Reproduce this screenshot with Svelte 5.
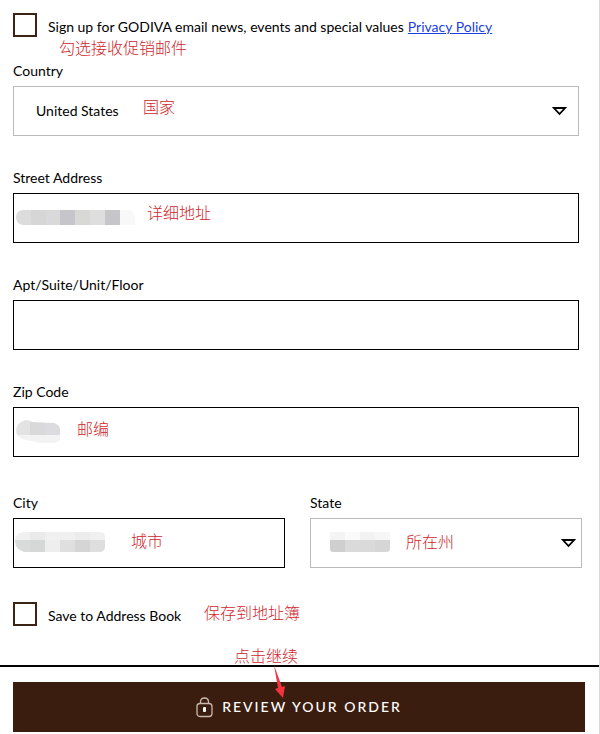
<script>
  const mosaics = {
    street: {
      width: 120,
      height: 15,
      tiles: [
        [0, 0, 15, 15, "#dcdcdc"],
        [15, 0, 15, 15, "#d6d6d7"],
        [30, 0, 14, 15, "#d9d9db"],
        [44, 0, 15, 15, "#c6c5cb"],
        [59, 0, 15, 15, "#d8d8d7"],
        [74, 0, 15, 15, "#dededf"],
        [89, 0, 15, 15, "#c6c5c9"],
        [104, 0, 16, 15, "#f8f8f8"]
      ],
      shape: "M7 0H114Q120 2 119 15H7Q0 14 0 7Q0 1 7 0Z"
    },
    zip: {
      width: 44,
      height: 24,
      tiles: [
        [0, 0, 14, 15, "#e3e3e4"],
        [14, 0, 15, 15, "#d9d9da"],
        [29, 0, 15, 15, "#dcdce0"],
        [0, 15, 44, 9, "#f3f3f3"]
      ],
      shape: "M10 0Q13 0 16 2L38 3Q44 5 44 9V20Q42 23 36 23H24Q17 21 10 20Q0 18 0 10Q1 2 10 0Z"
    },
    city: {
      width: 90,
      height: 20,
      tiles: [
        [0, 0, 90, 8, "#f0f0f1"],
        [15, 0, 15, 8, "#eaeaeb"],
        [60, 0, 15, 8, "#ececed"],
        [0, 8, 15, 12, "#d9dada"],
        [15, 8, 15, 12, "#d6d7d7"],
        [30, 8, 15, 12, "#eeeeef"],
        [45, 8, 15, 12, "#dfdfe0"],
        [60, 8, 15, 12, "#d5d5d6"],
        [75, 8, 15, 12, "#dededf"]
      ],
      shape: "M8 0H86Q90 1 90 4V15Q90 20 84 20H9Q0 17 0 9Q0 2 8 0Z"
    },
    state: {
      width: 60,
      height: 20,
      tiles: [
        [0, 0, 15, 8, "#f4f4f4"],
        [15, 0, 15, 8, "#fafafa"],
        [30, 0, 15, 8, "#f2f2f2"],
        [45, 0, 15, 8, "#f6f6f6"],
        [0, 8, 15, 12, "#cfcfd0"],
        [15, 8, 30, 12, "#dadada"],
        [45, 8, 15, 12, "#d6d6d6"]
      ],
      shape: "M0 0H60V17Q60 20 56 20H3Q0 20 0 17Z"
    }
  };
</script>

{#snippet mosaic(name)}
  <svg
    class="mosaic mosaic--{name}"
    width={mosaics[name].width}
    height={mosaics[name].height}
    aria-hidden="true"
  >
    <clipPath id="clip-{name}"><path d={mosaics[name].shape} /></clipPath>
    <g clip-path="url(#clip-{name})" shape-rendering="crispEdges">
      {#each mosaics[name].tiles as [x, y, width, height, fill]}
        <rect {x} {y} {width} {height} {fill} />
      {/each}
    </g>
  </svg>
{/snippet}

{#snippet arrow()}
  <svg class="select__arrow" width="15" height="9" viewBox="0 0 15 9" aria-hidden="true">
    <path d="M2 1H13L7.5 7Z" fill="none" stroke="#000" stroke-width="1.8" />
  </svg>
{/snippet}

<form class="checkout">
  <div class="checkout__fields">
    <div class="check check--signup">
      <input class="check__box" type="checkbox" id="signup" />
      <label for="signup">Sign up for GODIVA email news, events and special values</label>
      <a href="#privacy">Privacy Policy</a>
      <span class="note note--signup">勾选接收促销邮件</span>
    </div>

    <div class="field">
      <label for="country">Country</label>
      <div class="field__control">
        <select class="select" id="country">
          <option>United States</option>
        </select>
        {@render arrow()}
        <span class="note note--country">国家</span>
      </div>
    </div>

    <div class="field">
      <label for="street">Street Address</label>
      <div class="field__control">
        <input class="input" type="text" id="street" />
        {@render mosaic("street")}
        <span class="note note--street">详细地址</span>
      </div>
    </div>

    <div class="field">
      <label for="apt">Apt/Suite/Unit/Floor</label>
      <div class="field__control">
        <input class="input" type="text" id="apt" />
      </div>
    </div>

    <div class="field">
      <label for="zip">Zip Code</label>
      <div class="field__control">
        <input class="input" type="text" id="zip" />
        {@render mosaic("zip")}
        <span class="note note--zip">邮编</span>
      </div>
    </div>

    <div class="checkout__row">
      <div class="field">
        <label for="city">City</label>
        <div class="field__control">
          <input class="input" type="text" id="city" />
          {@render mosaic("city")}
          <span class="note note--city">城市</span>
        </div>
      </div>

      <div class="field">
        <label for="state">State</label>
        <div class="field__control">
          <select class="select" id="state">
            <option value=""></option>
          </select>
          {@render mosaic("state")}
          {@render arrow()}
          <span class="note note--state">所在州</span>
        </div>
      </div>
    </div>

    <div class="check check--save">
      <input class="check__box" type="checkbox" id="save" />
      <label for="save">Save to Address Book</label>
      <span class="note note--save">保存到地址簿</span>
    </div>
  </div>

  <div class="checkout__footer">
    <span class="note note--continue">点击继续</span>
    <svg class="pointer" width="16" height="34" viewBox="0 0 16 34" aria-hidden="true">
      <path d="M1 0L9 22L12 21L10 33L2 24L5 23Z" fill="#f5333f" />
    </svg>
    <button class="review" type="button">
      <svg width="18" height="21" viewBox="0 0 18 21" fill="none" stroke="#c9b8ae" aria-hidden="true">
        <rect x="1" y="6.5" width="15" height="13" rx="3" stroke-width="1.3" />
        <path d="M4.5 6.5V5Q4.5 1 8.5 1T12.5 5V6.5" stroke-width="1.3" />
        <rect x="7" y="10" width="3" height="5" rx="1" fill="#fff" stroke="none" />
      </svg>
      REVIEW YOUR ORDER
    </button>
  </div>
</form>

<style>
  :global(body) {
    margin: 0;
    background: #fff;
  }
  .checkout {
    border-right: 1px solid #d9d9d9;
    color: #000;
    font: 14px/20px Lato, "Noto Sans CJK SC", sans-serif;
    padding-bottom: 2px;
  }
  .checkout__fields {
    display: flex;
    flex-direction: column;
    gap: 32px;
    padding: 13px 20px 39px 13px;
  }
  .checkout__row {
    display: grid;
    grid-template-columns: 1fr 1fr;
    gap: 25px;
    margin: 4px -3px 0 0;
  }
  .check {
    position: relative;
    display: flex;
    align-items: center;
    height: 24px;
  }
  .check label {
    padding-top: 4px;
  }
  .check--signup {
    margin-bottom: -8px;
  }
  .check--save {
    margin-top: 2px;
  }
  .check__box {
    appearance: none;
    box-sizing: border-box;
    width: 24px;
    height: 24px;
    margin: 0 11px 0 0;
    border: 2px solid #3b2415;
    background: #fff;
  }
  .check__box:checked {
    box-shadow: inset 0 0 0 4px #fff;
    background: #3b1d0f;
  }
  .check a {
    padding: 4px 0 0 4px;
    color: #1a3fe0;
  }
  .field {
    display: flex;
    flex-direction: column;
    gap: 5px;
    min-width: 0;
  }
  .field__control {
    position: relative;
  }
  .input,
  .select {
    display: block;
    box-sizing: border-box;
    width: 100%;
    height: 50px;
    border: 1px solid #000;
    border-radius: 0;
    background: #fff;
    color: inherit;
    font: inherit;
    padding: 0 22px;
  }
  .select {
    appearance: none;
    border-color: #bbb;
  }
  .select__arrow {
    position: absolute;
    top: 21px;
    right: 12px;
    pointer-events: none;
  }
  .checkout__row .select__arrow {
    right: 6px;
  }
  .mosaic {
    position: absolute;
    pointer-events: none;
  }
  .mosaic--street {
    top: 17px;
    left: 3px;
  }
  .mosaic--zip {
    top: 13px;
    left: 3px;
  }
  .mosaic--city {
    top: 14px;
    left: 2px;
  }
  .mosaic--state {
    top: 14px;
    left: 20px;
  }
  .note {
    position: absolute;
    color: #d0262c;
    font: 300 16px/20px "Noto Sans CJK SC", sans-serif;
    white-space: nowrap;
    pointer-events: none;
  }
  .note--signup {
    top: 24px;
    left: 46px;
  }
  .note--country {
    top: 10px;
    left: 130px;
  }
  .note--street {
    top: 9px;
    left: 134px;
  }
  .note--zip {
    top: 11px;
    left: 64px;
  }
  .note--city {
    top: 12px;
    left: 118px;
  }
  .note--state {
    top: 13px;
    left: 96px;
  }
  .note--save {
    top: 0;
    left: 191px;
  }
  .note--continue {
    top: -22px;
    left: 234px;
  }
  .checkout__footer {
    position: relative;
    border-top: 2px solid #000;
    padding: 15px 14px 0 13px;
  }
  .pointer {
    position: absolute;
    top: -2px;
    left: 273px;
    pointer-events: none;
  }
  .review {
    display: flex;
    align-items: center;
    justify-content: center;
    gap: 8px;
    width: 100%;
    height: 50px;
    border: 0;
    background: #3b1d0f;
    color: #fff;
    font: inherit;
    font-weight: 500;
    letter-spacing: 2px;
  }
</style>
